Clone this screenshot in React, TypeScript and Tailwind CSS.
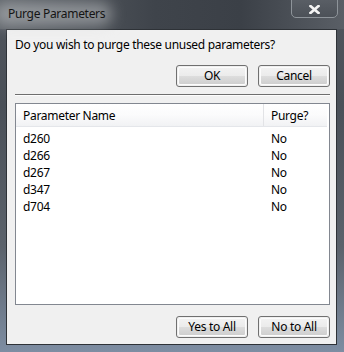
import React from "react";

const font = { fontFamily: '"Noto Sans", "Open Sans", sans-serif' };

function Btn({ label }: { label: string }) {
  return (
    <div className="w-[72px] h-[22px] rounded-[3px] border border-[#707070] p-px">
      <div className="h-full w-full rounded-[2px] border border-[#fcfcfc] bg-[linear-gradient(to_bottom,#f2f2f2_0%,#ebebeb_50%,#dddddd_51%,#cfcfcf_100%)] flex items-center justify-center text-[12px] leading-none text-[#000] tracking-[-0.3px]">
        {label}
      </div>
    </div>
  );
}

const rows = ["d260", "d266", "d267", "d347", "d704"];

export default function App() {
  return (
    <div
      className="w-[344px] h-[352px] flex flex-col overflow-hidden bg-[linear-gradient(to_bottom,#50555c_0%,#4a5058_30%,#5b626b_70%,#7d8da2_100%)] tracking-[-0.3px]"
      style={font}
    >
      {/* title bar */}
      <div className="relative h-[29px] flex-none bg-[linear-gradient(to_right,#5e6369_0%,#3f444b_45%,#3b4047_70%,#5a5f66_100%)]">
        <div className="absolute left-[-6px] top-[2px] w-[118px] h-[24px] rounded-full bg-[#d8dadc]/45 blur-[7px]" />
        <div className="relative pl-[8px] pt-[6px] text-[12px] leading-[16px] text-[#141414]">
          Purge Parameters
        </div>
        <div className="absolute left-[291px] top-[-2px] w-[47px] h-[20px] rounded-b-[5px] border border-[#8e949a] bg-[linear-gradient(to_bottom,#5a5f66,#4c5158)] flex items-center justify-center pt-[2px]">
          <svg width="11" height="9" viewBox="0 0 11 9">
            <path d="M1.5 1 L9.5 8 M9.5 1 L1.5 8" stroke="#f4f4f4" strokeWidth="2.6" strokeLinecap="square" />
          </svg>
        </div>
      </div>
      {/* client */}
      <div className="flex-1 pl-[6px] pr-[7px] pb-[7px] flex flex-col">
        <div className="flex-1 flex flex-col bg-[#f0f0f0] border border-[#2e3237]">
          <div className="pl-[8px] pt-[7px] text-[12px] leading-[16px] text-black">
            Do you wish to purge these unused parameters?
          </div>
          <div className="mt-[12px] flex justify-end gap-[10px] pr-[6px]">
            <Btn label="OK" />
            <Btn label="Cancel" />
          </div>
          <div className="mt-[7px] ml-[8px] mr-[6px] h-[2px] border-t border-[#6e6e6e] border-b border-b-[#fdfdfd]" />
          <div className="mt-[7px] ml-[8px] mr-[6px] flex-1 bg-white border border-[#828790] flex flex-col text-[12px] text-black">
            <div className="flex h-[23px] mr-[2px] bg-[linear-gradient(to_bottom,#ffffff_0%,#fbfbfc_50%,#f1f2f4_100%)] border-b border-[#e4e6ea]">
              <div className="w-[248px] pl-[7px] pt-[2px] flex items-center border-r border-[#e2e3e6]">Parameter Name</div>
              <div className="flex-1 pl-[7px] pt-[2px] flex items-center">Purge?</div>
            </div>
            <div className="pt-[3px] flex flex-col">
              {rows.map((r) => (
                <div key={r} className="flex h-[17px] items-center leading-[17px]">
                  <div className="w-[248px] pl-[7px]">{r}</div>
                  <div className="flex-1 pl-[7px]">No</div>
                </div>
              ))}
            </div>
          </div>
          <div className="mt-[11px] mb-[6px] flex justify-end gap-[10px] pr-[6px]">
            <Btn label="Yes to All" />
            <Btn label="No to All" />
          </div>
        </div>
      </div>
    </div>
  );
}
